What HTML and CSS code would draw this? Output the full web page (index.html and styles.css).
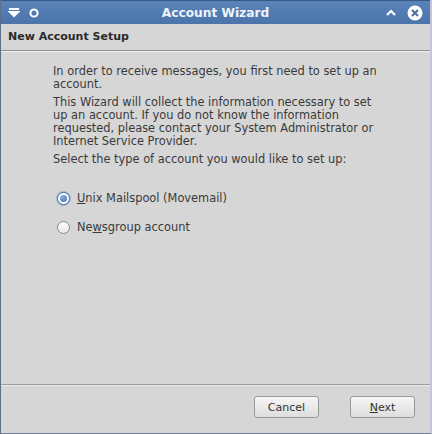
FILE: index.html
```html
<!DOCTYPE html>
<html>
<head>
<meta charset="utf-8">
<link rel="stylesheet" href="styles.css">
</head>
<body>
<div class="window">
  <div class="titlebar">
    <div class="tb-left">
      <svg width="12" height="12" viewBox="0 0 12 12"><path d="M1 2h10M2 5l4 4 4-4z" stroke="#fff" stroke-width="2" fill="#fff"/></svg>
      <svg width="12" height="12" viewBox="0 0 12 12"><circle cx="6" cy="6" r="3.6" stroke="#fff" stroke-width="2" fill="none"/></svg>
    </div>
    <div class="title">Account Wizard</div>
    <div class="tb-right">
      <svg width="12" height="12" viewBox="0 0 12 12"><path d="M2 8l4-4 4 4" stroke="#fff" stroke-width="2.2" fill="none"/></svg>
      <svg width="16" height="16" viewBox="0 0 16 16"><circle cx="8" cy="8" r="7.5" fill="#fff"/><path d="M5 5l6 6M11 5l-6 6" stroke="#4a6f9c" stroke-width="2"/></svg>
    </div>
  </div>
  <div class="header">New Account Setup</div>
  <div class="content">
    <p>In order to receive messages, you first need to set up an account.</p>
    <p>This Wizard will collect the information necessary to set up an account. If you do not know the information requested, please contact your System Administrator or Internet Service Provider.</p>
    <p>Select the type of account you would like to set up:</p>
    <div class="options">
      <label class="opt"><span class="radio checked"></span><span><u>U</u>nix Mailspool (Movemail)</span></label>
      <label class="opt"><span class="radio"></span><span>Ne<u>w</u>sgroup account</span></label>
    </div>
  </div>
  <div class="footer">
    <button class="btn">Cancel</button>
    <button class="btn"><u>N</u>ext</button>
  </div>
</div>
</body>
</html>
```
FILE: styles.css
```css
html, body { margin: 0; padding: 0; }
body {
  width: 432px; height: 434px; overflow: hidden;
  font-family: "DejaVu Sans", sans-serif;
  background: #d6d6d6;
}
.window {
  width: 432px; height: 434px; box-sizing: border-box;
  display: flex; flex-direction: column;
  border-left: 1px solid #5a6e86;
  border-right: 2px solid #c8c4d8;
  border-bottom: 1px solid #6d7f99;
  background: #d6d6d6;
}
.titlebar {
  height: 24px; flex: none;
  background: linear-gradient(#5a84b8, #4a74aa);
  border-top: 1px solid #37598a;
  box-sizing: border-box;
  display: flex; align-items: center; justify-content: space-between;
  padding: 0 7px 0 7px;
  color: #fff;
}
.tb-left, .tb-right { display: flex; align-items: center; gap: 8px; width: 40px; }
.tb-right { justify-content: flex-end; gap: 10px; }
.title { font-weight: bold; font-size: 12.2px; color: #eef3fa; }
.header {
  height: 27px; flex: none; box-sizing: border-box;
  font-weight: bold; font-size: 11px; color: #2a2a2a;
  padding: 6px 0 0 7px;
  border-bottom: 1px solid #8f8f8f;
  box-shadow: 0 1px 0 #f0f0f0;
}
.content {
  flex: 1;
  padding: 14px 47px 0 52px;
  font-size: 11.4px; color: #3a3a3a; line-height: 13px;
}
.content p { margin: 0 0 5px 0; }
.options { padding: 21px 0 0 4px; display: flex; flex-direction: column; gap: 16px; }
.opt { display: flex; align-items: center; gap: 7px; }
.radio {
  width: 13px; height: 13px; border-radius: 50%; box-sizing: border-box;
  border: 1px solid #8a8a8a; background: linear-gradient(#fdfdfd, #e8e8e8);
  display: inline-block; position: relative;
}
.radio.checked { border-color: #4a6fa0; background: #fff; box-shadow: 0 0 0 1px #9bb6d8; }
.radio.checked::after {
  content: ""; position: absolute; left: 2px; top: 2px; width: 7px; height: 7px; border-radius: 50%;
  background: radial-gradient(circle at 40% 35%, #8fb0dc, #3e6aa6);
}
.footer {
  height: 49px; flex: none; box-sizing: border-box;
  border-top: 1px solid #9c9c9c;
  box-shadow: inset 0 1px 0 #ececec;
  display: flex; justify-content: flex-end; align-items: center; gap: 31px;
  padding: 0 15px 4px 0;
}
.btn {
  width: 65px; height: 22px;
  font-family: "DejaVu Sans", sans-serif; font-size: 11px; color: #333;
  border: 1px solid #9a9a9a; border-radius: 3px;
  background: linear-gradient(#f6f6f6, #dedede);
  padding: 0;
}
```
